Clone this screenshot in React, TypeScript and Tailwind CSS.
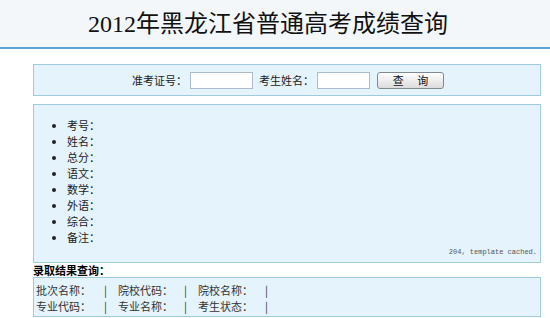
const scores = ['考号', '姓名', '总分', '语文', '数学', '外语', '综合', '备注']

const admitRows = [
  ['批次名称', '院校代码', '院校名称'],
  ['专业代码', '专业名称', '考生状态'],
]

const colWidths = ['w-[68px]', 'w-[80px]', 'w-[81px]']

export default function App() {
  return (
    <div className="min-h-[318px] w-[550px] overflow-hidden bg-white font-['Noto_Sans_CJK_SC',sans-serif] text-[11px] text-[#222]">
      {/* header */}
      <div className="flex h-[49px] items-center justify-center border-b-2 border-[#5aa3d6] bg-[#f3f7fa] pr-[14px]">
        <h1 className="font-['Liberation_Serif','Noto_Sans_CJK_SC',serif] text-[24px] leading-none text-[#111]">
          2012年黑龙江省普通高考成绩查询
        </h1>
      </div>

      <div className="ml-[33px] w-[508px]">
        {/* search form */}
        <div className="mt-[15px] flex h-[32px] items-center justify-center border border-[#9fcbe0] bg-[#e4f3fc] pl-[2px]">
          <span>准考证号：</span>
          <input className="ml-[3px] h-[17px] w-[63px] border border-[#a9bccb] bg-white" />
          <span className="ml-[6px]">考生姓名：</span>
          <input className="ml-[3px] h-[17px] w-[53px] border border-[#a9bccb] bg-white" />
          <button className="ml-[7px] h-[17px] w-[67px] rounded-[3px] border border-[#7f8a93] bg-gradient-to-b from-white to-[#dcdcdc] text-[11px] leading-none text-[#111]">
            查　 询
          </button>
        </div>

        {/* score result */}
        <div className="mt-[8px] h-[159px] border border-[#9fcbe0] bg-[#e4f3fc] pt-[12px]">
          <ul className="list-disc pl-[33px] leading-[16px]">
            {scores.map((s) => (
              <li key={s}>{s}：</li>
            ))}
          </ul>
          <div className="mt-[2px] pr-[3px] text-right font-['Liberation_Mono',monospace] text-[7px] leading-[10px] text-[#555]">
            204, template cached.
          </div>
        </div>

        {/* admission */}
        <div className="h-[14px] text-[11px] font-bold leading-[14px] text-black">录取结果查询：</div>
        <div className="h-[40px] border border-[#9fcbe0] bg-[#e4f3fc] pl-[2px] pt-[4px] leading-[16px] text-[#333]">
          {admitRows.map((row) => (
            <div key={row[0]} className="flex">
              {row.map((cell, i) => (
                <span key={cell} className={colWidths[i]}>
                  {i === 0 ? '' : <span className="mr-[11px]">|</span>}
                  {cell}：
                </span>
              ))}
              <span>|</span>
            </div>
          ))}
        </div>
      </div>
    </div>
  )
}
